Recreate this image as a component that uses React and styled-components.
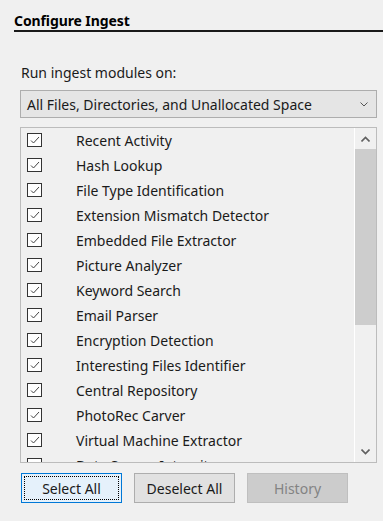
import React from "react";
import styled, { createGlobalStyle } from "styled-components";

const Global = createGlobalStyle`
  html, body { margin: 0; padding: 0; background: #f0f0f0; }
  body { font-family: "Noto Sans", "Open Sans", sans-serif; color: #000; }
`;

const Page = styled.div`
  width: 383px;
  height: 521px;
  overflow: hidden;
  padding-top: 12px;
  box-sizing: border-box;
`;

const Title = styled.div`
  margin-left: 14px;
  font-size: 14px;
  font-weight: 700;
  line-height: 18px;
  padding-bottom: 0;
  border-bottom: 2px solid #1a1a1a;
  letter-spacing: -0.1px;
`;

const Body = styled.div`
  padding: 0 6px 0 20px;
  display: flex;
  flex-direction: column;
`;

const Label = styled.div`
  margin-top: 32px;
  margin-left: 1px;
  font-size: 14px;
  line-height: 18px;
  color: #1a1a1a;
`;

const Combo = styled.div`
  margin-top: 8px;
  height: 28px;
  box-sizing: border-box;
  border: 1px solid #adadad;
  background: #e5e5e5;
  display: flex;
  align-items: center;
  justify-content: space-between;
  padding: 0 8px 0 6px;
  font-size: 14px;
  color: #1a1a1a;
`;

const ListBox = styled.div`
  margin-top: 9px;
  height: 336px;
  box-sizing: border-box;
  border: 1px solid #bcbcbc;
  display: flex;
  overflow: hidden;
`;

const Items = styled.div`
  flex: 1;
  display: flex;
  flex-direction: column;
  overflow: hidden;
`;

const Row = styled.div`
  flex: 0 0 25px;
  height: 25px;
  box-sizing: border-box;
  display: flex;
  align-items: center;
  padding: 0 0 1px 6px;
  font-size: 14px;
  color: #1a1a1a;
`;

const Box = styled.span`
  width: 15px;
  height: 14px;
  box-sizing: border-box;
  border: 1px solid #333;
  background: #fff;
  display: flex;
  align-items: center;
  justify-content: center;
  margin-right: 34px;
  flex: none;
`;

const ScrollBar = styled.div`
  width: 21px;
  border-left: 1px solid #fff;
  background: #f0f0f0;
  display: flex;
  flex-direction: column;
`;

const Arrow = styled.div`
  height: 21px;
  display: flex;
  align-items: center;
  justify-content: center;
  flex: none;
`;

const Thumb = styled.div`
  height: 176px;
  background: #cdcdcd;
  flex: none;
`;

const Track = styled.div`
  flex: 1;
`;

const Buttons = styled.div`
  margin-top: 10px;
  margin-left: 1px;
  display: flex;
  gap: 12px;
`;

const Button = styled.div`
  width: 101px;
  height: 30px;
  box-sizing: border-box;
  display: flex;
  align-items: center;
  justify-content: center;
  padding-top: 1px;
  font-size: 14px;
  position: relative;
  border: 1px solid ${(p) => (p.$focus ? "#0078d7" : p.$disabled ? "#bfbfbf" : "#adadad")};
  background: ${(p) => (p.$focus ? "#e5f1fb" : p.$disabled ? "#cccccc" : "#e1e1e1")};
  color: ${(p) => (p.$disabled ? "#838383" : "#1a1a1a")};
`;

const FocusRing = styled.span`
  position: absolute;
  inset: 2px;
  border: 1px dotted #000;
`;

const Check = () => (
  <svg width="10" height="8" viewBox="0 0 10 8">
    <path d="M1 4.5 L3.5 7 L9 1" fill="none" stroke="#444" strokeWidth="1" />
  </svg>
);

const Chevron = ({ up }) => (
  <svg width="9" height="6" viewBox="0 0 9 6">
    <path
      d={up ? "M0.5 5.5 L4.5 1.5 L8.5 5.5" : "M0.5 0.5 L4.5 4.5 L8.5 0.5"}
      fill="none"
      stroke="#606060"
      strokeWidth="1.6"
    />
  </svg>
);

const modules = [
  "Recent Activity",
  "Hash Lookup",
  "File Type Identification",
  "Extension Mismatch Detector",
  "Embedded File Extractor",
  "Picture Analyzer",
  "Keyword Search",
  "Email Parser",
  "Encryption Detection",
  "Interesting Files Identifier",
  "Central Repository",
  "PhotoRec Carver",
  "Virtual Machine Extractor",
  "Data Source Integrity",
  "Android Analyzer",
];

export default function App() {
  return (
    <>
      <Global />
      <Page>
        <Title>Configure Ingest</Title>
        <Body>
          <Label>Run ingest modules on:</Label>
          <Combo>
            <span>All Files, Directories, and Unallocated Space</span>
            <svg width="8" height="5" viewBox="0 0 8 5">
              <path d="M0.5 0.5 L4 4 L7.5 0.5" fill="none" stroke="#555" strokeWidth="1" />
            </svg>
          </Combo>
          <ListBox>
            <Items>
              {modules.map((m) => (
                <Row key={m}>
                  <Box>
                    <Check />
                  </Box>
                  {m}
                </Row>
              ))}
            </Items>
            <ScrollBar>
              <Arrow>
                <Chevron up />
              </Arrow>
              <Thumb />
              <Track />
              <Arrow>
                <Chevron />
              </Arrow>
            </ScrollBar>
          </ListBox>
          <Buttons>
            <Button $focus>
              <FocusRing />
              Select All
            </Button>
            <Button>Deselect All</Button>
            <Button $disabled>History</Button>
          </Buttons>
        </Body>
      </Page>
    </>
  );
}
